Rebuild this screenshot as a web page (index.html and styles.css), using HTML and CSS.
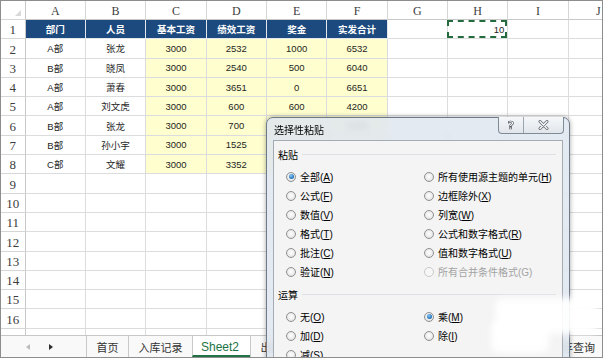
FILE: index.html
```html
<!DOCTYPE html>
<html lang="zh-CN">
<head>
<meta charset="utf-8">
<title>选择性粘贴</title>
<link rel="stylesheet" href="styles.css">
</head>
<body>
<div class="window">
  <div class="sheet">
    <div class="grid">
      <div class="corner"></div><div class="ch">A</div><div class="ch">B</div><div class="ch">C</div><div class="ch">D</div><div class="ch">E</div><div class="ch">F</div><div class="ch">G</div><div class="ch">H</div><div class="ch">I</div><div class="ch">J</div>

      <div class="rh">1</div><div class="c hd">部门</div><div class="c hd">人员</div><div class="c hd">基本工资</div><div class="c hd">绩效工资</div><div class="c hd">奖金</div><div class="c hd">实发合计</div><div class="c"></div><div class="c copy">10<span class="ants"></span></div><div class="c"></div><div class="c"></div>

      <div class="rh">2</div><div class="c">A部</div><div class="c">张龙</div><div class="c y">3000</div><div class="c y">2532</div><div class="c y">1000</div><div class="c y">6532</div><div class="c"></div><div class="c"></div><div class="c"></div><div class="c"></div>

      <div class="rh">3</div><div class="c">B部</div><div class="c">晓凤</div><div class="c y">3000</div><div class="c y">2540</div><div class="c y">500</div><div class="c y">6040</div><div class="c"></div><div class="c"></div><div class="c"></div><div class="c"></div>

      <div class="rh">4</div><div class="c">A部</div><div class="c">萧春</div><div class="c y">3000</div><div class="c y">3651</div><div class="c y">0</div><div class="c y">6651</div><div class="c"></div><div class="c"></div><div class="c"></div><div class="c"></div>

      <div class="rh">5</div><div class="c">A部</div><div class="c">刘文虎</div><div class="c y">3000</div><div class="c y">600</div><div class="c y">600</div><div class="c y">4200</div><div class="c"></div><div class="c"></div><div class="c"></div><div class="c"></div>

      <div class="rh">6</div><div class="c">B部</div><div class="c">张龙</div><div class="c y">3000</div><div class="c y">700</div><div class="c y"></div><div class="c y">3700</div><div class="c"></div><div class="c"></div><div class="c"></div><div class="c"></div>

      <div class="rh">7</div><div class="c">B部</div><div class="c">孙小宇</div><div class="c y">3000</div><div class="c y">1525</div><div class="c y"></div><div class="c y"></div><div class="c"></div><div class="c"></div><div class="c"></div><div class="c"></div>

      <div class="rh">8</div><div class="c">C部</div><div class="c">文耀</div><div class="c y">3000</div><div class="c y">3352</div><div class="c y"></div><div class="c y"></div><div class="c"></div><div class="c"></div><div class="c"></div><div class="c"></div>

      <div class="rh">9</div><div class="c"></div><div class="c"></div><div class="c"></div><div class="c"></div><div class="c"></div><div class="c"></div><div class="c"></div><div class="c"></div><div class="c"></div><div class="c"></div>
      <div class="rh">10</div><div class="c"></div><div class="c"></div><div class="c"></div><div class="c"></div><div class="c"></div><div class="c"></div><div class="c"></div><div class="c"></div><div class="c"></div><div class="c"></div>
      <div class="rh">11</div><div class="c"></div><div class="c"></div><div class="c"></div><div class="c"></div><div class="c"></div><div class="c"></div><div class="c"></div><div class="c"></div><div class="c"></div><div class="c"></div>
      <div class="rh">12</div><div class="c"></div><div class="c"></div><div class="c"></div><div class="c"></div><div class="c"></div><div class="c"></div><div class="c"></div><div class="c"></div><div class="c"></div><div class="c"></div>
      <div class="rh">13</div><div class="c"></div><div class="c"></div><div class="c"></div><div class="c"></div><div class="c"></div><div class="c"></div><div class="c"></div><div class="c"></div><div class="c"></div><div class="c"></div>
      <div class="rh">14</div><div class="c"></div><div class="c"></div><div class="c"></div><div class="c"></div><div class="c"></div><div class="c"></div><div class="c"></div><div class="c"></div><div class="c"></div><div class="c"></div>
      <div class="rh">15</div><div class="c"></div><div class="c"></div><div class="c"></div><div class="c"></div><div class="c"></div><div class="c"></div><div class="c"></div><div class="c"></div><div class="c"></div><div class="c"></div>
      <div class="rh">16</div><div class="c"></div><div class="c"></div><div class="c"></div><div class="c"></div><div class="c"></div><div class="c"></div><div class="c"></div><div class="c"></div><div class="c"></div><div class="c"></div>
      <div class="rh"></div><div class="c"></div><div class="c"></div><div class="c"></div><div class="c"></div><div class="c"></div><div class="c"></div><div class="c"></div><div class="c"></div><div class="c"></div><div class="c"></div>
    </div>
  </div>

  <div class="tabs">
    <div class="nav"><span class="arrow prev"></span><span class="arrow next"></span></div>
    <div class="tab">首页</div>
    <div class="tab">入库记录</div>
    <div class="tab active">Sheet2</div>
    <div class="tab">出库记录</div>
    <div class="tab last">库存查询</div>
  </div>

  <div class="dialog">
    <div class="titlebar">
      <span class="title">选择性粘贴</span>
      <div class="caption">
        <span class="cbtn help">?</span>
        <span class="cbtn close"><svg width="11" height="10" viewBox="0 0 11 10"><path d="M2 1.5 L9 8.5 M9 1.5 L2 8.5" stroke="#6b6f74" stroke-width="3" stroke-linecap="round"/><path d="M2 1.5 L9 8.5 M9 1.5 L2 8.5" stroke="#ffffff" stroke-width="1.2" stroke-linecap="round"/></svg></span>
      </div>
    </div>
    <div class="panel">
      <div class="group-title">粘贴</div>
      <div class="options">
        <div class="opt"><span class="radio on"></span><span>全部(<u>A</u>)</span></div>
        <div class="opt"><span class="radio"></span><span>所有使用源主题的单元(<u>H</u>)</span></div>
        <div class="opt"><span class="radio"></span><span>公式(<u>F</u>)</span></div>
        <div class="opt"><span class="radio"></span><span>边框除外(<u>X</u>)</span></div>
        <div class="opt"><span class="radio"></span><span>数值(<u>V</u>)</span></div>
        <div class="opt"><span class="radio"></span><span>列宽(<u>W</u>)</span></div>
        <div class="opt"><span class="radio"></span><span>格式(<u>T</u>)</span></div>
        <div class="opt"><span class="radio"></span><span>公式和数字格式(<u>R</u>)</span></div>
        <div class="opt"><span class="radio"></span><span>批注(<u>C</u>)</span></div>
        <div class="opt"><span class="radio"></span><span>值和数字格式(<u>U</u>)</span></div>
        <div class="opt"><span class="radio"></span><span>验证(<u>N</u>)</span></div>
        <div class="opt disabled"><span class="radio"></span><span>所有合并条件格式(G)</span></div>
      </div>
      <div class="group-title">运算</div>
      <div class="options">
        <div class="opt"><span class="radio"></span><span>无(<u>O</u>)</span></div>
        <div class="opt"><span class="radio on"></span><span>乘(<u>M</u>)</span></div>
        <div class="opt"><span class="radio"></span><span>加(<u>D</u>)</span></div>
        <div class="opt"><span class="radio"></span><span>除(<u>I</u>)</span></div>
        <div class="opt"><span class="radio"></span><span>减(<u>S</u>)</span></div>
      </div>
    </div>
  </div>

  <div class="smudge smudge-a"></div>
  <div class="smudge smudge-b"></div>
</div>
</body>
</html>
```

FILE: styles.css
```css
* { box-sizing: border-box; }

body {
  margin: 0;
  background: #ffffff;
  font-family: "Liberation Sans", "Noto Sans CJK SC", sans-serif;
}

.window {
  position: relative;
  width: 603px;
  height: 358px;
  border: 1px solid #8d8d8d;
  overflow: hidden;
  display: flex;
  flex-direction: column;
  background: #ffffff;
}

.sheet {
  flex: 1;
  overflow: hidden;
}

.grid {
  display: grid;
  grid-template-columns: 24.6px repeat(10, 60.35px);
  grid-template-rows: 19px repeat(17, 19.3px);
  width: max-content;
}

.corner, .ch, .rh {
  border-right: 1px solid #d6d6d6;
  border-bottom: 1px solid #d6d6d6;
  font-family: "Liberation Serif", serif;
  color: #3d3d3d;
  display: flex;
  justify-content: center;
  align-items: flex-end;
  line-height: 1;
}

.corner { position: relative; border-right-color: #c8c8c8; }
.corner::after {
  content: "";
  position: absolute;
  right: 4px;
  bottom: 3px;
  border-style: solid;
  border-width: 0 0 6px 6px;
  border-color: transparent transparent #d9d9d9 transparent;
}

.ch { font-size: 12px; padding-bottom: 2px; border-bottom-color: #c8c8c8; }
.rh { font-size: 13px; padding-bottom: 2px; border-right-color: #c8c8c8; }

.c {
  border-right: 1px solid #dadcdd;
  border-bottom: 1px solid #dadcdd;
  font-size: 9.5px;
  color: #1e1e1e;
  display: flex;
  align-items: center;
  justify-content: center;
}

.hd {
  background: #1d4a7e;
  color: #ffffff;
  font-weight: bold;
  border-color: #e4e8ee;
}

.y { background: #fefecf; }

.copy {
  position: relative;
  justify-content: flex-end;
  padding-right: 3px;
}
.ants {
  position: absolute;
  left: -1px;
  top: 0;
  right: 0;
  bottom: 0;
  border: 2px dashed #246b3e;
}

/* sheet tabs */
.tabs {
  flex: none;
  height: 22px;
  border-top: 1px solid #c6c6c6;
  background: #f9f9f9;
  display: flex;
  font-size: 11px;
  color: #333333;
}
.nav {
  width: 85px;
  display: flex;
  align-items: center;
}
.arrow {
  width: 0;
  height: 0;
  border-style: solid;
}
.arrow.prev {
  margin-left: 25px;
  border-width: 3.5px 4px 3.5px 0;
  border-color: transparent #bdbdbd transparent transparent;
}
.arrow.next {
  margin-left: 19px;
  border-width: 3.5px 0 3.5px 4px;
  border-color: transparent transparent transparent #2d2d2d;
}
.tab {
  display: flex;
  align-items: center;
  padding: 0 9.5px;
  border-left: 1px solid #c9c9c9;
}
.tab.active {
  background: #ffffff;
  color: #217346;
  font-size: 12px;
  padding: 2px 11px 0 8px;
  border-bottom: 2px solid #217346;
}
.tab.last {
  margin-left: auto;
  padding: 0 7px 0 10px;
}

/* dialog */
.dialog {
  position: absolute;
  left: 265px;
  top: 116px;
  width: 304px;
  height: 262px;
  border: 1px solid #6e7a87;
  border-radius: 7px 7px 0 0;
  background: rgba(224, 231, 239, 0.86);
  backdrop-filter: blur(3px);
  box-shadow: 0 0 5px rgba(0, 0, 0, 0.35);
  font-size: 10px;
  color: #000000;
}
.titlebar {
  position: relative;
  height: 22px;
  display: flex;
  align-items: center;
  padding-left: 7px;
}
.caption {
  position: absolute;
  top: -1px;
  right: 5px;
  height: 17px;
  display: flex;
  border: 1px solid #7f8b97;
  border-top: none;
  border-radius: 0 0 4px 4px;
  background: linear-gradient(#f5f7f9, #e1e6eb);
  overflow: hidden;
}
.cbtn {
  display: flex;
  align-items: center;
  justify-content: center;
}
.cbtn.help {
  width: 25px;
  border-right: 1px solid #9aa5b0;
  font-family: "DejaVu Sans", sans-serif;
  font-size: 11px;
  font-weight: bold;
  color: #ffffff;
  -webkit-text-stroke: 0.7px #555a60;
}
.cbtn.close { width: 39px; }

.panel {
  margin: 0 6px;
  height: 300px;
  border: 1px solid #a3abb3;
  background: #f4f4f4;
}
.group-title {
  display: flex;
  align-items: center;
  gap: 4px;
  height: 16px;
  margin-top: 5px;
  padding: 0 6px 0 4px;
}
.group-title::after {
  content: "";
  flex: 1;
  border-top: 1px solid #dde1e5;
}
.options {
  display: grid;
  grid-template-columns: 138px 1fr;
  grid-auto-rows: 19px;
  margin-top: 5px;
  padding-left: 12px;
}
.opt {
  display: flex;
  align-items: center;
  gap: 4px;
  white-space: nowrap;
}
.opt.disabled { color: #a3a3a3; }
.opt.disabled .radio { border-color: #c9c9c9; background: #f7f7f7; }

.radio {
  position: relative;
  flex: none;
  width: 10px;
  height: 10px;
  border-radius: 50%;
  border: 1px solid #8f9192;
  background: radial-gradient(circle at 50% 45%, #ffffff 0, #ececec 55%, #cfd1d3 100%);
}
.radio.on::after {
  content: "";
  position: absolute;
  left: 1.5px;
  top: 1.5px;
  width: 5px;
  height: 5px;
  border-radius: 50%;
  background: radial-gradient(circle at 40% 35%, #8ccaf3 0, #2a79c2 60%, #164f8c 100%);
}

/* blurred watermark patch */
.smudge {
  position: absolute;
  background: rgba(255, 255, 255, 0.93);
  filter: blur(3px);
  border-radius: 8px;
}
.smudge-a { left: 494px; top: 297px; width: 102px; height: 36px; }
.smudge-b { left: 490px; top: 320px; width: 58px; height: 32px; }
```
